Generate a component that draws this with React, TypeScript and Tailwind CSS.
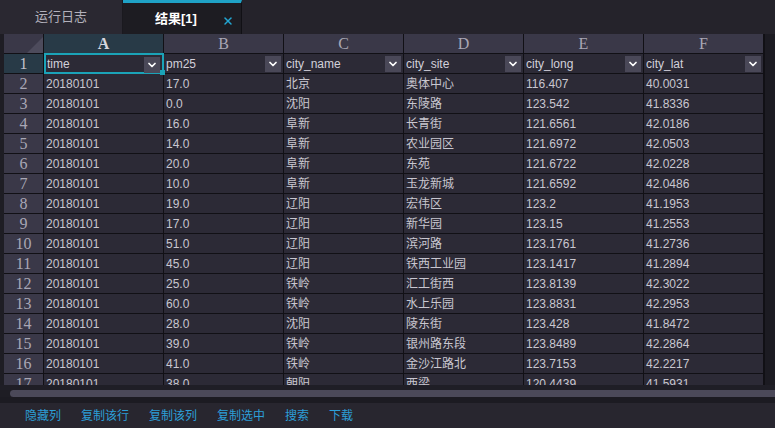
import React from 'react';
import { ChevronDown, X } from 'lucide-react';

const cols = ['A', 'B', 'C', 'D', 'E', 'F'];
const header = ['time', 'pm25', 'city_name', 'city_site', 'city_long', 'city_lat'];

const rows: string[][] = [
  ['20180101', '17.0', '北京', '奥体中心', '116.407', '40.0031'],
  ['20180101', '0.0', '沈阳', '东陵路', '123.542', '41.8336'],
  ['20180101', '16.0', '阜新', '长青街', '121.6561', '42.0186'],
  ['20180101', '14.0', '阜新', '农业园区', '121.6972', '42.0503'],
  ['20180101', '20.0', '阜新', '东苑', '121.6722', '42.0228'],
  ['20180101', '10.0', '阜新', '玉龙新城', '121.6592', '42.0486'],
  ['20180101', '19.0', '辽阳', '宏伟区', '123.2', '41.1953'],
  ['20180101', '17.0', '辽阳', '新华园', '123.15', '41.2553'],
  ['20180101', '51.0', '辽阳', '滨河路', '123.1761', '41.2736'],
  ['20180101', '45.0', '辽阳', '铁西工业园', '123.1417', '41.2894'],
  ['20180101', '25.0', '铁岭', '汇工街西', '123.8139', '42.3022'],
  ['20180101', '60.0', '铁岭', '水上乐园', '123.8831', '42.2953'],
  ['20180101', '28.0', '沈阳', '陵东街', '123.428', '41.8472'],
  ['20180101', '39.0', '铁岭', '银州路东段', '123.8489', '42.2864'],
  ['20180101', '41.0', '铁岭', '金沙江路北', '123.7153', '42.2217'],
  ['20180101', '38.0', '朝阳', '西梁', '120.4439', '41.5931'],
];

const actions = ['隐藏列', '复制该行', '复制该列', '复制选中', '搜索', '下载'];

const font = { fontFamily: '"Liberation Sans", "Noto Sans CJK SC", sans-serif' };

const DropBtn = () => (
  <span className="absolute right-[2px] top-[2px] w-[16px] h-[16px] bg-[#4a4858] flex items-center justify-center">
    <ChevronDown size={12} strokeWidth={3.5} className="text-white" />
  </span>
);

const App: React.FC = () => {
  return (
    <div className="w-[775px] h-[428px] bg-[#25232b] flex flex-col overflow-hidden" style={font}>
      {/* tabs */}
      <div className="h-[34px] flex shrink-0 bg-[#25232b]">
        <div className="w-[123px] bg-[#2a2831] flex items-center justify-center text-[13px] text-[#b3b1bb] border-r border-[#1a191f]">
          运行日志
        </div>
        <div className="w-[119px] bg-[#1d1c22] border-t-[3px] border-[#1fa2c6] border-r border-r-[#111015] flex items-center relative">
          <span className="ml-[32px] text-[13px] text-white font-bold">结果[1]</span>
          <X size={12} strokeWidth={3} className="absolute right-[7px] top-[12px] text-[#22a6d2]" />
        </div>
      </div>

      {/* grid */}
      <div className="h-[351px] flex shrink-0 overflow-hidden bg-[#1e1d24]">
        <div className="w-[4px] shrink-0 bg-[#1e1d24]" />
        <div className="flex flex-col w-[760px] shrink-0 bg-[#2c2a36]">
          {/* column letters */}
          <div className="flex h-[20px] shrink-0 border-b border-[#111015]">
            <div className="w-[40px] shrink-0 bg-[#3a3848] border-r border-[#111015] relative overflow-hidden">
              <div
                className="absolute right-0 bottom-0 w-0 h-0 border-l-[16px] border-l-transparent border-b-[16px] border-b-[#4d4b5c]"
              />
            </div>
            {cols.map((c, i) => (
              <div
                key={c}
                className={
                  i === 0
                    ? 'w-[120px] shrink-0 bg-[#283a47] border-r border-[#111015] flex items-center justify-center text-[16px] font-bold text-[#d6d6de]'
                    : 'w-[120px] shrink-0 bg-[#3a3848] border-r border-[#111015] flex items-center justify-center text-[16px] text-[#a9a7b5]'
                }
                style={{ fontFamily: '"Liberation Serif", serif' }}
              >
                {c}
              </div>
            ))}
          </div>

          {/* header row */}
          <div className="flex h-[20px] shrink-0 border-b border-[#111015]">
            <div
              className="w-[40px] shrink-0 bg-[#283a47] border-r border-[#111015] flex items-center justify-center text-[16px] text-[#c2c2cc]"
              style={{ fontFamily: '"Liberation Serif", serif' }}
            >
              1
            </div>
            {header.map((h, i) => (
              <div
                key={h}
                className={
                  i === 0
                    ? 'w-[120px] shrink-0 relative border-2 border-[#1ba3b8] -mt-px h-[21px] flex items-center pl-[1px] text-[12px] text-[#d2d0da]'
                    : 'w-[120px] shrink-0 relative border-r border-[#111015] flex items-center pl-[2px] text-[12px] text-[#d2d0da]'
                }
              >
                {h}
                <DropBtn />
                {i === 0 && (
                  <span className="absolute -right-[3px] -bottom-[3px] w-[5px] h-[5px] bg-[#1ba3b8]" />
                )}
              </div>
            ))}
          </div>

          {rows.map((r, ri) => (
            <div key={ri} className="flex h-[20px] shrink-0 border-b border-[#111015]">
              <div
                className="w-[40px] shrink-0 bg-[#3a3848] border-r border-[#111015] flex items-center justify-center text-[16px] text-[#a9a7b5]"
                style={{ fontFamily: '"Liberation Serif", serif' }}
              >
                {ri + 2}
              </div>
              {r.map((v, ci) => (
                <div
                  key={ci}
                  className="w-[120px] shrink-0 border-r border-[#111015] flex items-center pl-[2px] text-[12px] text-[#c9c7d0] whitespace-nowrap"
                >
                  {v}
                </div>
              ))}
            </div>
          ))}
        </div>
        <div className="flex-1 bg-[#1c1b22] border-l border-[#111015]" />
      </div>

      {/* horizontal scrollbar */}
      <div className="h-[18px] shrink-0 flex flex-col bg-[#1e1d24]">
        <div className="h-[5px] bg-[#1f1e26]" />
        <div className="h-[7px] ml-[10px] bg-[#4b4959] rounded-l-[4px]" />
        <div className="flex-1 bg-[#1c1b22]" />
      </div>

      {/* toolbar */}
      <div className="flex-1 bg-[#28262f] flex items-center pl-[25px] gap-5">
        {actions.map((a) => (
          <span key={a} className="text-[12px] text-[#2c9fd8] cursor-pointer">
            {a}
          </span>
        ))}
      </div>
    </div>
  );
};

export default App;
